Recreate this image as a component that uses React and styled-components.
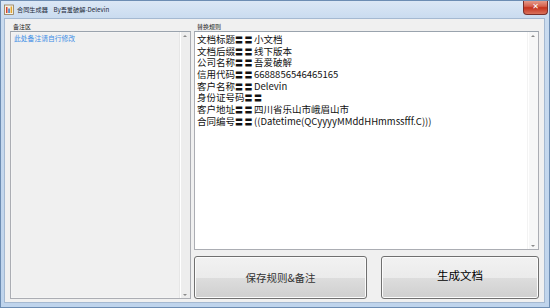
import React from "react";
import styled, { createGlobalStyle } from "styled-components";

const GlobalStyle = createGlobalStyle`
  html, body {
    margin: 0;
    padding: 0;
    background: #ffffff;
  }
  * {
    box-sizing: border-box;
  }
`;

const Window = styled.div`
  width: 550px;
  height: 308px;
  display: flex;
  flex-direction: column;
  background: linear-gradient(to bottom, #dbe7f5 0px, #c9dbef 18px, #bfd4ec 100%);
  border: 1px solid #6d8db3;
  font-family: "Noto Sans CJK SC", "Noto Sans", sans-serif;
  overflow: hidden;
`;

const TitleBar = styled.div`
  height: 17px;
  display: flex;
  align-items: center;
  padding-left: 3px;
  position: relative;
`;

const TitleText = styled.span`
  font-size: 6.2px;
  color: #1e2a3a;
  margin-left: 3px;
  white-space: pre;
`;

const CloseButton = styled.div`
  position: absolute;
  right: 1px;
  top: -1px;
  width: 25px;
  height: 15px;
  border: 1px solid #7a2f2a;
  border-top: none;
  border-radius: 0 0 4px 4px;
  background: linear-gradient(to bottom, #e8a595 0%, #d5614e 45%, #c5321d 55%, #d9725c 100%);
  display: flex;
  align-items: center;
  justify-content: center;
  color: #ffffff;
  font-family: "DejaVu Sans", sans-serif;
  font-size: 8px;
  font-weight: bold;
  line-height: 1;
`;

const Client = styled.div`
  flex: 1;
  margin: 0 4px 4px 3px;
  background: #f0f0f0;
  border: 1px solid #a5b9d1;
  display: flex;
  gap: 3px;
  padding: 3px 5px 3px 5px;
`;

const Column = styled.div`
  display: flex;
  flex-direction: column;
  width: ${(p) => (p.$width ? `${p.$width}px` : "auto")};
  flex: ${(p) => (p.$width ? "none" : 1)};
`;

const Label = styled.div`
  font-size: 6px;
  line-height: 9px;
  height: 9px;
  color: #222;
  padding-left: ${(p) => p.$indent || 3}px;
`;

const Box = styled.div`
  flex: ${(p) => (p.$grow ? 1 : "none")};
  display: flex;
  background: ${(p) => (p.$white ? "#ffffff" : "#f0f0f0")};
  border: 1px solid #abadb3;
  border-top-color: #9aa3ad;
  box-shadow: inset 0 0 0 1px ${(p) => (p.$white ? "#ffffff" : "#f4f4f4")};
`;

const BoxText = styled.div`
  flex: 1;
  padding: ${(p) => (p.$white ? "2px 2px" : "1px 3px")};
  overflow: hidden;
`;

const Track = styled.div`
  width: 11px;
  display: flex;
  flex-direction: column;
  justify-content: space-between;
  align-items: center;
  padding: 3px 0 2px;
  border-left: 1px solid ${(p) => (p.$white ? "#f3f3f3" : "#e6e6e6")};
  background: ${(p) => (p.$white ? "#f7f7f7" : "#ededed")};
  box-shadow: inset 1px 0 0 #ffffff;
`;

const Arrow = styled.div`
  width: 0;
  height: 0;
  border-left: 2px solid transparent;
  border-right: 2px solid transparent;
  ${(p) =>
    p.$down
      ? "border-top: 2px solid #8a8a8a;"
      : "border-bottom: 2px solid #8a8a8a;"}
`;

const NoteText = styled.div`
  font-size: 6.8px;
  color: #3c8ee6;
  line-height: 10px;
`;

const RuleLine = styled.div`
  font-size: 9.5px;
  line-height: 10.67px;
  color: #111;
  white-space: nowrap;
`;

const Mark = styled.span`
  font-size: 8px;
  font-weight: bold;
  letter-spacing: 1.5px;
`;

const ButtonRow = styled.div`
  display: flex;
  gap: 14px;
  margin-top: 6px;
  height: 43px;
`;

const Button = styled.div`
  width: ${(p) => (p.$width ? `${p.$width}px` : "auto")};
  flex: ${(p) => (p.$width ? "none" : 1)};
  border: 1px solid #707070;
  border-radius: 3px;
  background: linear-gradient(to bottom, #f2f2f2 0%, #ebebeb 50%, #dddddd 51%, #cfcfcf 100%);
  box-shadow: inset 0 0 0 1px #fcfcfc;
  display: flex;
  align-items: center;
  justify-content: center;
  color: ${(p) => (p.$primary ? "#000" : "#333")};
  font-size: ${(p) => (p.$primary ? "11.5px" : "10.5px")};
  padding-bottom: ${(p) => (p.$primary ? "6px" : "0")};
`;

const AppIcon = () => (
  <svg width="10" height="11" viewBox="0 0 10 11">
    <rect x="0.5" y="1" width="9" height="9.5" fill="#f6f1e4" stroke="#8f7b55" strokeWidth="0.8" />
    <rect x="2" y="3" width="1.5" height="6" fill="#d9452f" />
    <rect x="4.3" y="4.5" width="1.5" height="4.5" fill="#3a78c9" />
    <rect x="6.6" y="2.5" width="1.5" height="6.5" fill="#e2a52a" />
  </svg>
);

const ScrollBox = ({ white, grow, children }) => (
  <Box $white={white} $grow={grow}>
    <BoxText $white={white}>{children}</BoxText>
    <Track $white={white}>
      <Arrow />
      <Arrow $down />
    </Track>
  </Box>
);

const rules = [
  ["文档标题", "小文档"],
  ["文档后缀", "线下版本"],
  ["公司名称", "吾爱破解"],
  ["信用代码", "6688856546465165"],
  ["客户名称", "Delevin"],
  ["身份证号码", ""],
  ["客户地址", "四川省乐山市峨眉山市"],
  ["合同编号", "((Datetime(QCyyyyMMddHHmmssfff.C)))"],
];

export default function App() {
  return (
    <>
      <GlobalStyle />
      <Window>
        <TitleBar>
          <AppIcon />
          <TitleText>{"合同生成器    By吾爱破解-Delevin"}</TitleText>
          <CloseButton>✕</CloseButton>
        </TitleBar>
        <Client>
          <Column $width={181}>
            <Label $indent={3}>备注区</Label>
            <ScrollBox grow>
              <NoteText>此处备注请自行修改</NoteText>
            </ScrollBox>
          </Column>
          <Column>
            <Label>替换规则</Label>
            <ScrollBox white grow>
              {rules.map(([key, value]) => (
                <RuleLine key={key}>
                  {key}
                  <Mark>〓〓</Mark>
                  {value}
                </RuleLine>
              ))}
            </ScrollBox>
            <ButtonRow>
              <Button $width={173}>保存规则&amp;备注</Button>
              <Button $primary>生成文档</Button>
            </ButtonRow>
          </Column>
        </Client>
      </Window>
    </>
  );
}
